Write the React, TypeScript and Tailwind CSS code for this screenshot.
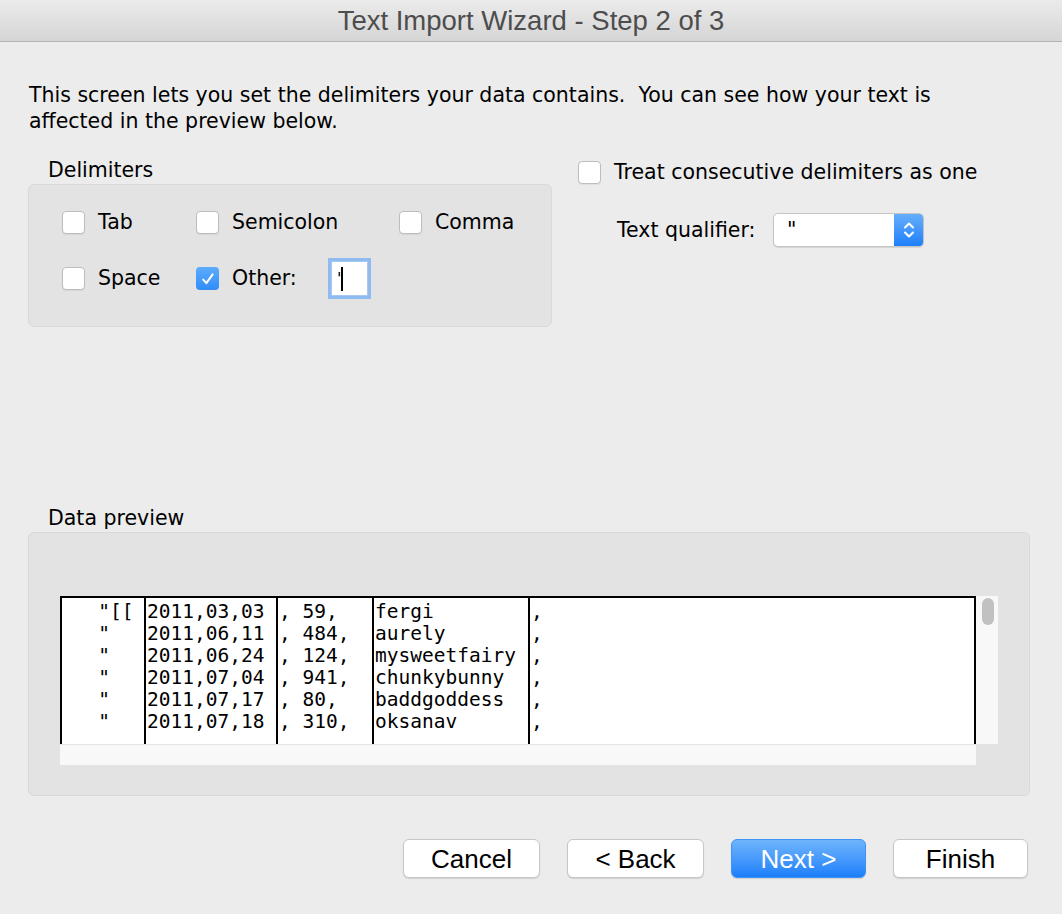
import React from 'react';

const rows = [
  { a: '   "[[', b: '2011,03,03', c: ', 59,', d: 'fergi', e: ',' },
  { a: '   "', b: '2011,06,11', c: ', 484,', d: 'aurely', e: ',' },
  { a: '   "', b: '2011,06,24', c: ', 124,', d: 'mysweetfairy', e: ',' },
  { a: '   "', b: '2011,07,04', c: ', 941,', d: 'chunkybunny', e: ',' },
  { a: '   "', b: '2011,07,17', c: ', 80,', d: 'baddgoddess', e: ',' },
  { a: '   "', b: '2011,07,18', c: ', 310,', d: 'oksanav', e: ',' },
];

const Checkbox: React.FC<{ checked?: boolean }> = ({ checked }) =>
  checked ? (
    <span className="w-[23px] h-[23px] shrink-0 rounded-[4px] bg-linear-to-b from-[#5dacfc] to-[#2f8cf8] flex items-center justify-center">
      <svg width="16" height="16" viewBox="0 0 16 16">
        <path d="M3.2 8.6 L6.4 12.2 L12.6 3.4" fill="none" stroke="white" strokeWidth="2" strokeLinecap="round" strokeLinejoin="round" />
      </svg>
    </span>
  ) : (
    <span className="w-[23px] h-[23px] shrink-0 rounded-[4px] bg-white border border-[#bdbdbd] shadow-[0_1px_1px_rgba(0,0,0,0.06)]" />
  );

const Option: React.FC<{ label: string; checked?: boolean }> = ({ label, checked }) => (
  <div className="flex items-center gap-[13px]">
    <Checkbox checked={checked} />
    <span>{label}</span>
  </div>
);

const Column: React.FC<{ field: 'a' | 'b' | 'c' | 'd' | 'e'; className: string }> = ({ field, className }) => (
  <div className={`border-l-2 border-black pt-[3px] pl-px ${className}`}>
    {rows.map((r, i) => (
      <div key={i} className="h-[22px] leading-[22px] whitespace-pre">{r[field]}</div>
    ))}
  </div>
);

const Button: React.FC<{ label: string; primary?: boolean; className: string }> = ({ label, primary, className }) => (
  <button
    className={
      primary
        ? `h-[39px] rounded-[6px] border border-[#3f93f7] bg-linear-to-b from-[#6eb4fb] to-[#1a7ffb] text-white shadow-[0_1px_1px_rgba(0,0,0,0.12)] ${className}`
        : `h-[39px] rounded-[6px] border border-[#c6c6c6] bg-white text-black shadow-[0_1px_1px_rgba(0,0,0,0.12)] ${className}`
    }
  >
    {label}
  </button>
);

const App: React.FC = () => {
  return (
    <div className="w-[1062px] h-[914px] overflow-hidden bg-[#ececec] text-black flex flex-col font-['DejaVu_Sans',sans-serif] text-[20.5px]">
      {/* Title bar */}
      <div className="h-[42px] shrink-0 flex items-center justify-center border-b border-[#b3b3b3] bg-linear-to-b from-[#ebebeb] to-[#d5d5d5] font-['Liberation_Sans',Arial,sans-serif] text-[27.5px] text-[#4d4d4d]">
        Text Import Wizard - Step 2 of 3
      </div>

      <p className="mt-[40px] ml-[29px] leading-[26px] whitespace-nowrap">
        This screen lets you set the delimiters your data contains.&nbsp; You can see how your text is
        <br />
        affected in the preview below.
      </p>

      <div className="flex ml-[28px] mt-[23px]">
        {/* Delimiters group */}
        <div className="w-[524px]">
          <div className="pl-[20px] leading-[26px]">Delimiters</div>
          <div className="mt-px h-[143px] rounded-[6px] border border-[#d9d9d9] bg-[#e3e3e3] pt-[22px] pl-[33px]">
            <div className="grid grid-cols-[134px_203px_1fr] h-[25px] items-center">
              <Option label="Tab" />
              <Option label="Semicolon" />
              <Option label="Comma" />
            </div>
            <div className="grid grid-cols-[134px_203px_1fr] h-[41px] mt-[26px] items-center">
              <Option label="Space" />
              <div className="flex items-center">
                <Checkbox checked />
                <span className="ml-[13px] w-[96px]">Other:</span>
                <div className="w-[43px] h-[41px] bg-[#8fbbf1] p-[3px]">
                  <div className="w-full h-full bg-white border border-[#a9c8ef] flex items-center pl-[5px]">
                    <span className="text-[16px] leading-none">'</span>
                    <span className="w-[2px] h-[24px] bg-black" />
                  </div>
                </div>
              </div>
              <div />
            </div>
          </div>
        </div>

        {/* Right options */}
        <div className="ml-[26px] pt-[3px]">
          <div className="h-[24px] flex items-center gap-[13px]">
            <Checkbox />
            <span>Treat consecutive delimiters as one</span>
          </div>
          <div className="mt-[29px] pl-[39px] flex items-center">
            <span className="w-[156px]">Text qualifier:</span>
            <div className="w-[151px] h-[34px] rounded-[5px] bg-white border border-[#c4c4c4] shadow-[0_1px_1px_rgba(0,0,0,0.1)] flex items-center overflow-hidden">
              <span className="pl-[13px] flex-1">"</span>
              <div className="w-[29px] h-full bg-linear-to-b from-[#64adfb] to-[#1b7ffa] flex items-center justify-center">
                <svg width="14" height="22" viewBox="0 0 14 22">
                  <path d="M3 8.5 L7 4.5 L11 8.5 M3 13.5 L7 17.5 L11 13.5" fill="none" stroke="white" strokeWidth="2" strokeLinecap="round" strokeLinejoin="round" />
                </svg>
              </div>
            </div>
          </div>
        </div>
      </div>

      {/* Data preview */}
      <div className="mt-[178px] pl-[48px] leading-[26px]">Data preview</div>
      <div className="ml-[28px] mt-px w-[1002px] h-[264px] rounded-[6px] border border-[#d9d9d9] bg-[#e3e3e3] pt-[63px] pl-[31px]">
        <div className="grid grid-cols-[916px_22px] grid-rows-[148px_21px]">
          <div className="flex bg-white border-t-2 border-r-2 border-black overflow-hidden font-['DejaVu_Sans_Mono',monospace] text-[19.5px]">
            <Column field="a" className="w-[84px]" />
            <Column field="b" className="w-[132px]" />
            <Column field="c" className="w-[96px]" />
            <Column field="d" className="w-[156px]" />
            <Column field="e" className="flex-1" />
          </div>
          <div className="bg-[#f8f8f8] pt-[2px] pl-[6px]">
            <div className="w-[12px] h-[27px] rounded-full bg-[#c1c1c1]" />
          </div>
          <div className="bg-[#f8f8f8] border-t border-[#e4e4e4]" />
          <div />
        </div>
      </div>

      {/* Buttons */}
      <div className="flex justify-end gap-[27px] pr-[34px] mt-[43px] font-['Liberation_Sans',Arial,sans-serif] text-[26px]">
        <Button label="Cancel" className="w-[137px]" />
        <Button label="< Back" className="w-[137px]" />
        <Button label="Next >" primary className="w-[135px]" />
        <Button label="Finish" className="w-[135px]" />
      </div>
    </div>
  );
};

export default App;
